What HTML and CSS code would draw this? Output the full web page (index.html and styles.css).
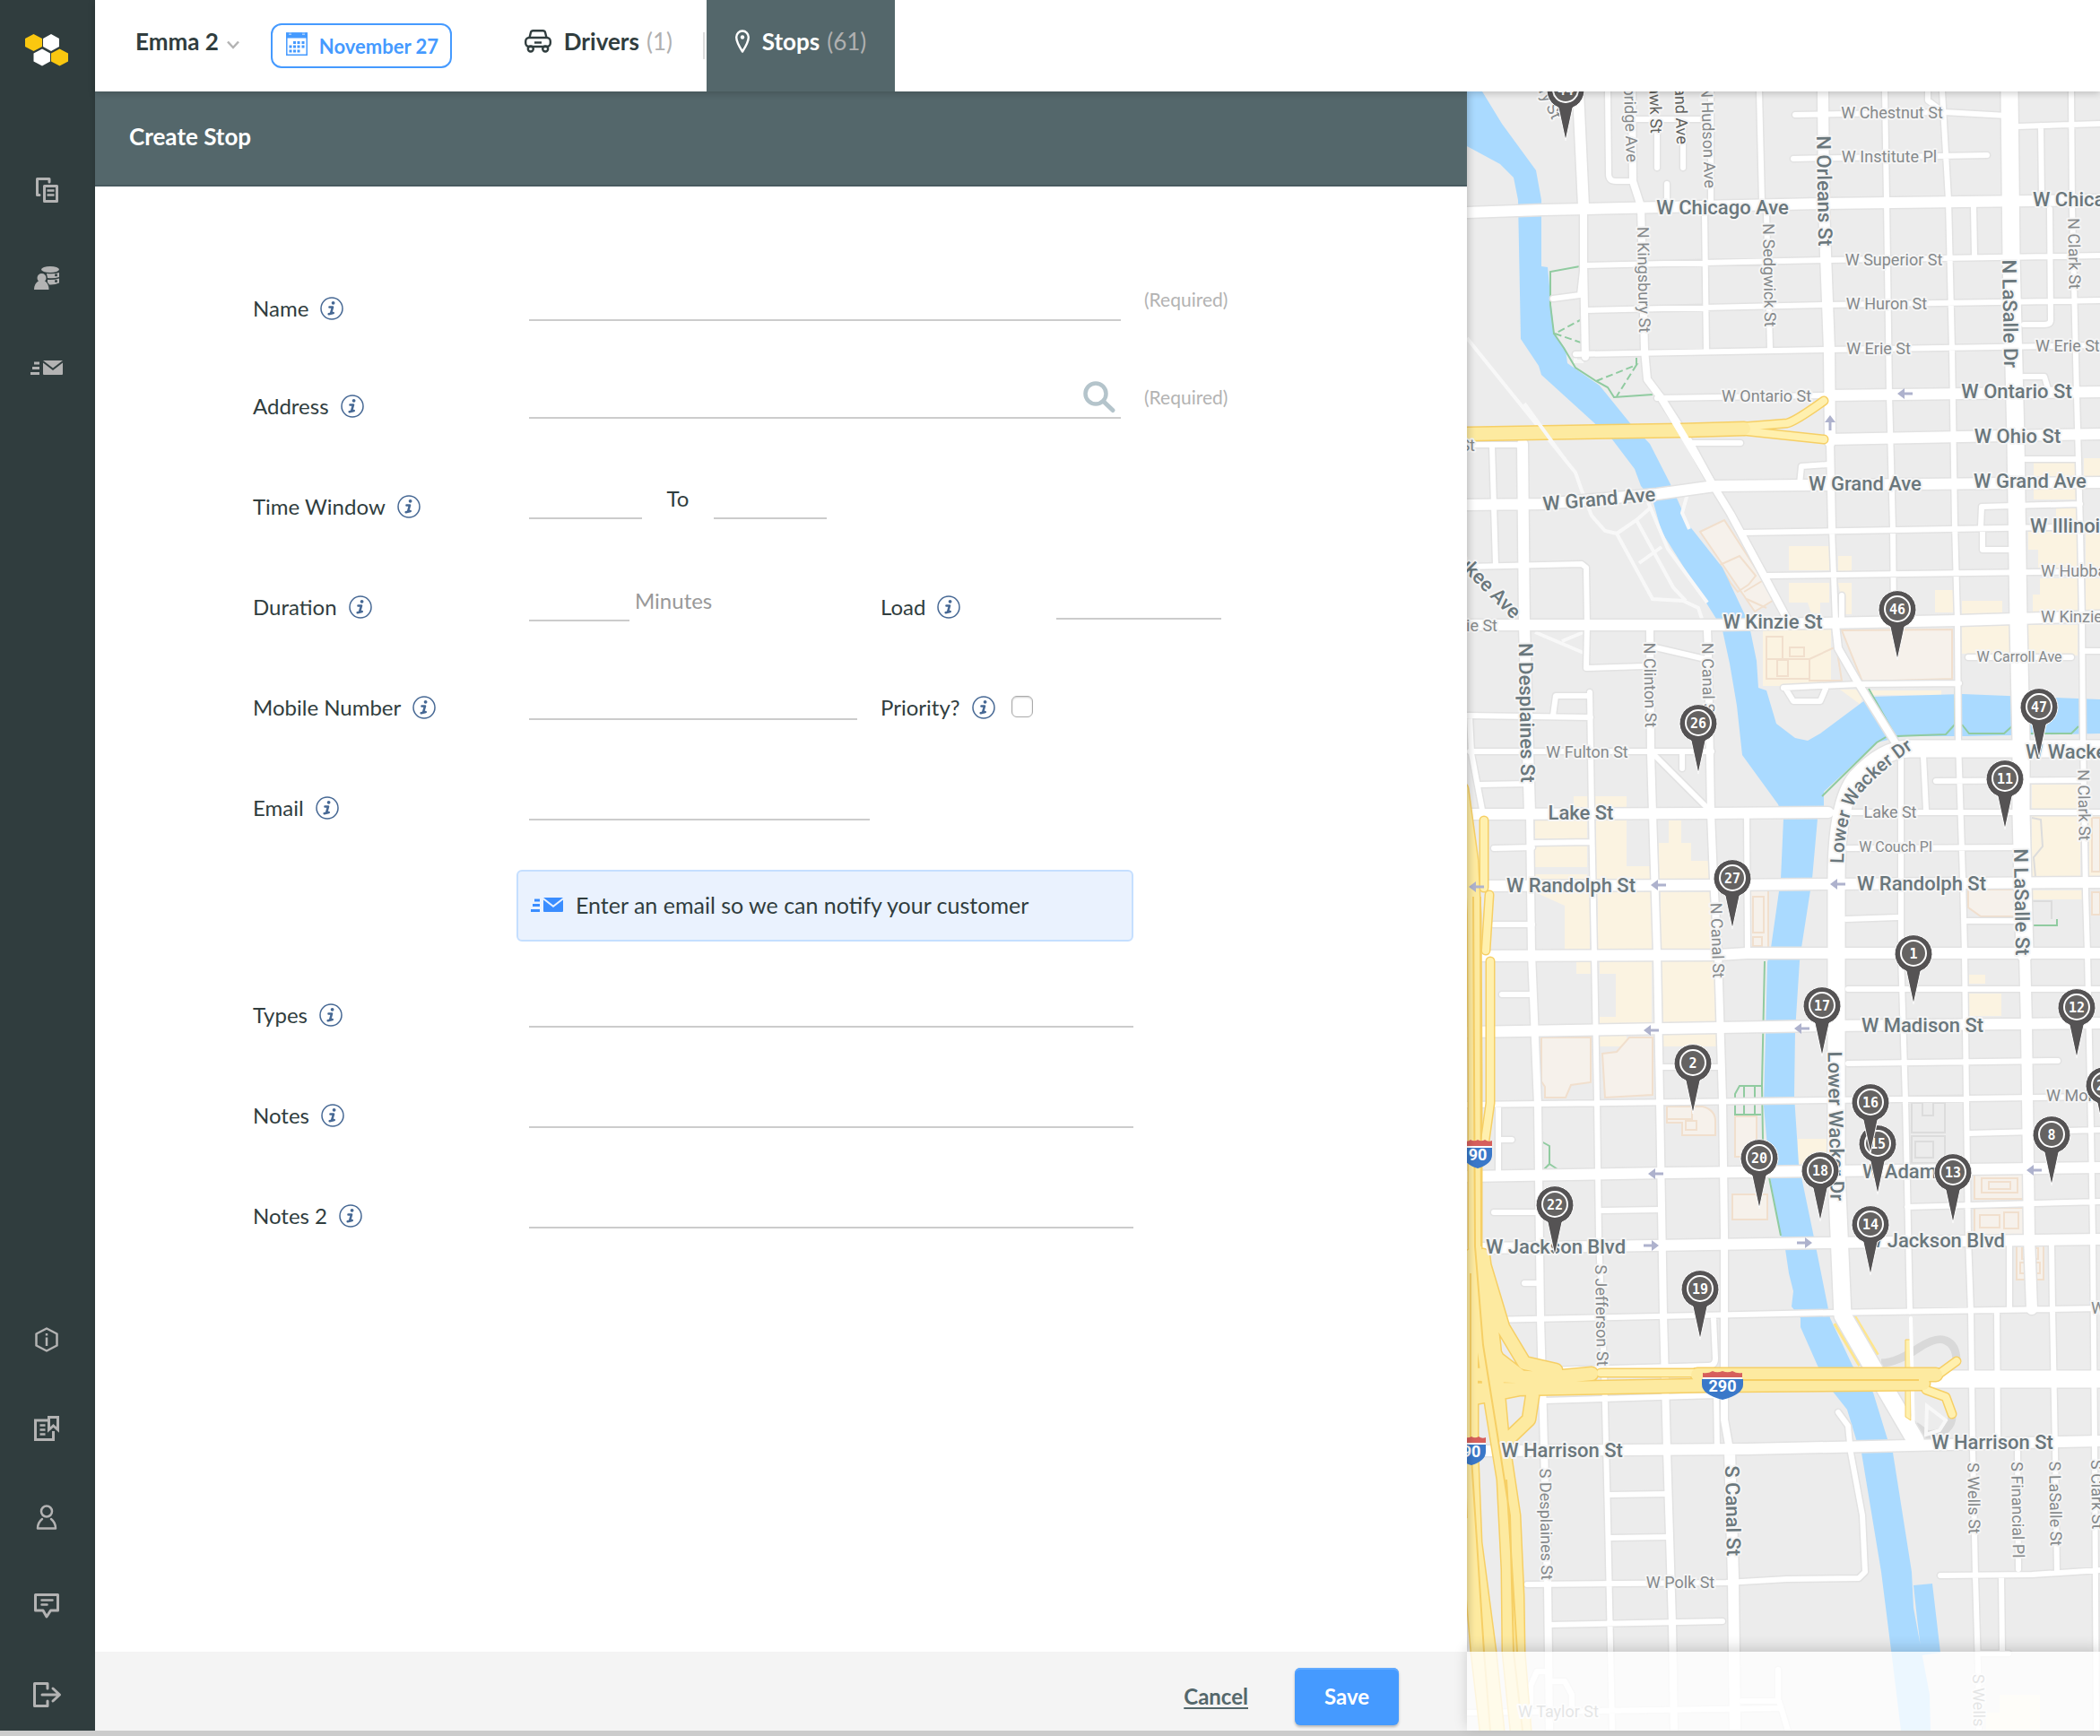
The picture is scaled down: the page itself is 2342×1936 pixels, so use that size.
FILE: index.html
```html
<!DOCTYPE html>
<html lang="en">
<head>
<meta charset="utf-8">
<title>Create Stop</title>
<meta name="viewport" content="width=device-width, initial-scale=1">
<link rel="stylesheet" href="styles.css">
</head>
<body>
<svg class="sprite" aria-hidden="true">
  <symbol id="info" viewBox="0 0 26 26">
    <circle cx="13" cy="13" r="12" fill="none" stroke="currentColor" stroke-width="1.5"/>
    <circle cx="14.600" cy="6.800" r="1.900" fill="currentColor"/>
    <path d="M10.500 11.500h3.500l-2 7M9.700 19.200l5-1.200" fill="none" stroke="currentColor" stroke-width="2.600" stroke-linecap="round" stroke-linejoin="round"/>
  </symbol>
  <symbol id="mail" viewBox="0 0 36 16">
    <path d="M4 1.500h6v3H4zM2 7h8v3H2zM0 13h10v3H0z" fill="currentColor"/>
    <path d="M14 0h22L25 8.500zM14 2.500l11 8.500 11-8.500V15q0 1-1 1H15q-1 0-1-1z" fill="currentColor"/>
  </symbol>
</svg>
<div class="app">
  <aside class="sidebar">
    <a href="#" class="logo" aria-label="Home">
      <svg viewBox="0 0 48 36" width="48" height="36">
        <path fill="#fac710" d="M9.500 0l9.500 5v9l-9.500 5L0 14V5zM38.500 16.500l9.500 5v9l-9.500 5-9.500-5v-9z"/>
        <path fill="#fff" d="M29 0l9 5v9l-9 5-9-5V5zM19 16.500l9 5v9l-9 5-9.500-5v-9z"/>
      </svg>
    </a>
    <nav class="side-nav">
      <a href="#" aria-label="Plans"><svg viewBox="0 0 28 28"><path d="M17 5V1.500H3.500v18H6" fill="none" stroke="currentColor" stroke-width="3" stroke-linecap="round" stroke-linejoin="round"/><rect x="11.500" y="9.500" width="14" height="17" fill="none" stroke="currentColor" stroke-width="3" stroke-linejoin="round"/><path d="M14.500 14.500h8M14.500 19.500h8" stroke="currentColor" stroke-width="2.500"/></svg></a>
      <a href="#" aria-label="Customers"><svg viewBox="0 0 28 28"><ellipse cx="18" cy="3.500" rx="10" ry="3.500" fill="currentColor"/><path d="M14 8q8 1 14-1v5q-6 2-13 1zM15 15q7 .5 13-1.500v5q-5 2.500-11 2-1-2-2-2.500z" fill="currentColor"/><circle cx="24.500" cy="9.800" r="1.500" fill="#303d3e"/><circle cx="24.500" cy="16.500" r="1.500" fill="#303d3e"/><circle cx="8.500" cy="13" r="6" fill="#303d3e"/><circle cx="8.500" cy="13" r="5" fill="currentColor"/><path d="M5.500 16h6q5 3 5 10H0q0-7 5.500-10z" fill="currentColor"/></svg></a>
      <a href="#" aria-label="Notifications"><svg class="wide" viewBox="0 0 36 16"><use href="#mail"/></svg></a>
    </nav>
    <nav class="side-nav side-nav-bottom">
      <a href="#" aria-label="About"><svg viewBox="0 0 28 28"><path d="M14 1.500l11.500 6v13L14 26.500l-11.500-6v-13z" fill="none" stroke="currentColor" stroke-width="2.500" stroke-linejoin="round"/><path d="M14 11.500v9.500M14 7v2.500" stroke="currentColor" stroke-width="2.500"/></svg></a>
      <a href="#" aria-label="Guides"><svg viewBox="0 0 28 28"><path d="M16 5H1.500v21.500h20V17" fill="none" stroke="currentColor" stroke-width="3"/><path d="M6.500 10.500h6M6.500 15.500h6M6.500 20.500h6" stroke="currentColor" stroke-width="2.500"/><path d="M16.500 1.500h10v14l-5-4.500-5 4.500z" fill="none" stroke="currentColor" stroke-width="3"/></svg></a>
      <a href="#" aria-label="Account"><svg viewBox="0 0 28 28"><circle cx="14" cy="7.500" r="6" fill="none" stroke="currentColor" stroke-width="2.500"/><path d="M9 16q-5 4-5 10.500h20Q24 20 19 16" fill="none" stroke="currentColor" stroke-width="2.500" stroke-linejoin="round" stroke-linecap="round"/></svg></a>
      <a href="#" aria-label="Feedback"><svg viewBox="0 0 28 28"><path d="M1.500 1.500h25v17.500h-8L14 26l-4-7H1.500z" fill="none" stroke="currentColor" stroke-width="3" stroke-linejoin="round"/><path d="M8.500 7.500h12M8.500 12.500h6" stroke="currentColor" stroke-width="2.500" stroke-linecap="round"/></svg></a>
      <a href="#" aria-label="Log out"><svg viewBox="0 0 28 28"><path d="M15 7V1.500H.500v25H15V21" fill="none" stroke="currentColor" stroke-width="3" stroke-linecap="round" stroke-linejoin="round"/><path d="M9 14h19M21 7l7.500 7-7.500 7" fill="none" stroke="currentColor" stroke-width="3" stroke-linecap="round" stroke-linejoin="round"/></svg></a>
    </nav>
  </aside>

  <header class="topbar">
    <button type="button" class="plan">Emma 2
      <svg viewBox="0 0 14 10" width="14" height="10"><path d="M1 1.500l6 6.500 6-6.500" fill="none" stroke="#b4b4b4" stroke-width="2.500"/></svg>
    </button>
    <button type="button" class="date">
      <svg viewBox="0 0 24 26" width="24" height="26"><path d="M.800 1h22.400v24.200H.800z" fill="none" stroke="currentColor" stroke-width="1.500"/><path d="M0 .500h3v2h3v-2h12v2h3v-2h3V6.500H0z" fill="currentColor"/><path d="M8 10h3v3H8zM12.500 10h3v3h-3zM17.500 10h3v3h-3zM3.500 14.500h3v3h-3zM8 14.500h3v3H8zM12.500 14.500h3v3h-3zM17.500 14.500h3v3h-3zM3.500 19.500h3v3h-3zM8 19.500h3v3H8zM12.500 19.500h3v3h-3z" fill="currentColor"/></svg>
      November 27
    </button>
    <nav class="tabs">
      <a href="#" class="tab">
        <svg viewBox="0 0 30 26" width="30" height="26" fill="none" stroke="currentColor" stroke-width="2.400"><path d="M5.500 9l1.500-6q.5-1.800 2.500-1.800h11q2 0 2.500 1.800l1.500 6"/><rect x="1.200" y="9" width="27.600" height="10" rx="4"/><path d="M11 14.500h8"/><circle cx="6.800" cy="21.500" r="3"/><circle cx="23.200" cy="21.500" r="3"/></svg>
        <span>Drivers</span><span class="count">(1)</span>
      </a>
      <a href="#" class="tab active" aria-current="page">
        <svg viewBox="0 0 16 26" width="16" height="26"><path d="M8 24.500Q1.200 14 1.200 8.500a6.800 7 0 0 1 13.600 0Q14.800 14 8 24.500z" fill="none" stroke="currentColor" stroke-width="2.400" stroke-linejoin="round"/><circle cx="8" cy="8.500" r="2.200" fill="currentColor"/></svg>
        <span>Stops</span><span class="count">(61)</span>
      </a>
    </nav>
  </header>

  <main class="panel">
    <h1 class="panel-title">Create Stop</h1>
    <form id="stop-form" class="stop-form">
      <div class="row row-first">
        <label class="label" for="name">Name <svg class="info"><use href="#info"/></svg></label>
        <div class="field"><input id="name" class="line full" type="text"><span class="required">(Required)</span></div>
      </div>
      <div class="row">
        <label class="label" for="address">Address <svg class="info"><use href="#info"/></svg></label>
        <div class="field">
          <div class="search full"><input id="address" class="line" type="text"><button type="button" aria-label="Search"><svg viewBox="0 0 36 36" width="36" height="36" fill="none" stroke="#b4c4cb"><circle cx="14" cy="14" r="11.500" stroke-width="4.500"/><path d="M22.500 22.500L33 32.500" stroke-width="5" stroke-linecap="round"/></svg></button></div>
          <span class="required">(Required)</span>
        </div>
      </div>
      <div class="row">
        <label class="label" for="from">Time Window <svg class="info"><use href="#info"/></svg></label>
        <div class="field"><input id="from" class="line time" type="text"><label class="to" for="until">To</label><input id="until" class="line time" type="text"></div>
      </div>
      <div class="row row-pair">
        <label class="label" for="duration">Duration <svg class="info"><use href="#info"/></svg></label>
        <div class="field"><input id="duration" class="line duration" type="text"><span class="unit">Minutes</span></div>
        <div class="second">
          <label class="label load-label" for="load">Load <svg class="info"><use href="#info"/></svg></label>
          <div class="field"><input id="load" class="line load" type="text"></div>
        </div>
      </div>
      <div class="row row-pair">
        <label class="label" for="mobile">Mobile Number <svg class="info"><use href="#info"/></svg></label>
        <div class="field"><input id="mobile" class="line mobile" type="tel"></div>
        <div class="second">
          <label class="label" for="priority">Priority? <svg class="info"><use href="#info"/></svg></label>
          <input id="priority" class="check" type="checkbox">
        </div>
      </div>
      <div class="row">
        <label class="label" for="email">Email <svg class="info"><use href="#info"/></svg></label>
        <div class="field"><input id="email" class="line email" type="email"></div>
      </div>
      <p class="notice"><svg viewBox="0 0 36 16" width="36" height="16"><use href="#mail"/></svg>Enter an email so we can notify your customer</p>
      <div class="row">
        <label class="label" for="types">Types <svg class="info"><use href="#info"/></svg></label>
        <div class="field"><input id="types" class="line long" type="text"></div>
      </div>
      <div class="row">
        <label class="label" for="notes">Notes <svg class="info"><use href="#info"/></svg></label>
        <div class="field"><input id="notes" class="line long" type="text"></div>
      </div>
      <div class="row">
        <label class="label" for="notes2">Notes 2 <svg class="info"><use href="#info"/></svg></label>
        <div class="field"><input id="notes2" class="line long" type="text"></div>
      </div>
    </form>
  </main>

  <section class="map" aria-label="Map of stops">
    <svg class="map-canvas" viewBox="1636 102 706 1828" preserveAspectRatio="xMinYMin slice">
      <defs>
        <path id="road-s" d="M1664 497L1668 630M1636 496H1690Q1698 496 1698 504M1793 102L1794 194Q1794 202 1802 202H1821M1848 140V187M1877 140V187M1825 133H1902M1859 205V228M1908 102V223M1901 237L1903 392M1962 102L1965 225L1970 237L1974 388M1732 333L1762 329L1766 293M1768 346L2039 340L2342 335M1757 395L2039 390L2342 385M1766 296L2039 290L2342 285M1848 444L2039 441M1884 494H1941M2007 540L2009 520L2039 518M2002 128L2168 125L2238 129M2000 177L2216 173M2250 141L2342 138M2150 102V112L2166 124M2276 140L2277 223M2286 233L2287 357Q2287 362 2280 362H2257M2201 230L2202 283M2257 420H2280L2285 437M2259 512H2318M2209 587L2210 565L2320 562M2211 590V613H2243M2102 102L2104 223L2107 440L2111 590L2112 687M2166 102L2173 223L2177 390L2180 583L2183 693L2184 827L2189 980L2191 1063L2193 1227L2195 1380L2198 1463L2200 1617L2203 1757L2206 1860L2207 1930M2310 102L2311 233L2316 440L2320 590L2322 693L2323 827L2326 997L2328 1063L2332 1260L2334 1380L2336 1610L2338 1930M1943 594L2342 587M1971 642L2342 637M2043 590L2047 693M2054 664V697M1636 632L1764 629L1769 633L1770 697L1769 745L1834 743M1846 722L1902 735M1636 798L1774 800M1732 798L1735 776H1773M1639 838H1909M1639 798L1641 840L1653 903M1650 875L1705 874M1773 772L1775 907L1778 1063L1781 1227L1783 1380L1789 1527L1793 1693L1798 1930M1876 840V857M1843 840L1908 905M1948 907L1949 1063M1989 767L2073 763L2185 762M1992 769L2000 782H2030L2036 768M1666 946L1709 945M1709 940L1775 939M1666 1031H1709M1675 1109H1709M2061 1103L2342 1103M2061 1186L2295 1183M1852 1190H1918M1636 1232L2039 1227L2342 1223M2195 1264L2342 1260M1666 1352H1714M1787 1350L1852 1349M2127 1346L2342 1340M1657 1472L2039 1464L2342 1459M1700 1431H1716M1672 1271H1686M1671 1235V1306M2039 906H2342M2120 843V1063L2125 1227L2130 1463M2145 843L2148 903M2159 871L2320 870M2061 946L2259 945M2059 1025L2116 1023M2193 1027H2259M1723 1562L1912 1556M1721 1528L1905 1523Q1913 1523 1913 1515L1911 1470M1914 1550L1915 1617M1796 1667L1859 1666M1797 1715L1862 1714M1703 1767L1925 1765L1993 1761L2073 1760L2080 1753L2077 1690L2064 1620L2061 1590L2050 1575M1728 1812L1921 1808M2164 1757L2266 1756L2342 1751M2232 1757L2233 1843M2227 1463L2228 1605M2250 1613L2251 1750M2288 1387L2289 1460L2292 1617L2294 1753M2241 1387V1460M1636 1910L1984 1905M1943 1897H1984L1994 1930M1983 1862V1897M1707 1900V1880L1714 1864H1727M1730 1875H1745L1753 1890V1905M2206 1844H2240M2322 726H2342M2195 733H2310"/>
        <path id="road-m" d="M1766 230V293L1768 398M1820 102L1821 202L1830 230L1834 390L1837 423L1852 443L1884 493L1908 537L1930 573L1970 647L1993 690M1706 907L1708 1063L1715 1232L1718 1470L1721 1577L1726 1767L1728 1930M2041 493L2043 590M2047 697L2050 723L2073 763L2118 835M1840 700L1841 840L1843 907L1848 1063L1851 1227L1855 1467L1859 1617L1865 1810L1867 1930M1904 702L1905 730L1908 907L1911 980L1916 1063L1921 1227L1923 1373V1583L1929 1617"/>
        <path id="road-l" d="M1760 102L1766 230M2033 102L2034 230L2040 390L2041 493M1698 495L1700 697L1706 907M1636 237L1721 234L2030 227L2342 223M2039 441L2342 437M2039 490L2342 484M1636 563L1721 562L1848 551L1912 542L2342 538M1636 697H1921L2184 692L2342 687M1636 908L1902 907L2039 906M1636 988L1916 987L2039 986L2342 984M1636 1066L1916 1065L1948 1063H2342M1636 1151L1916 1146L2039 1144L2342 1141M1636 1312L1857 1308L2039 1306L2342 1302M1653 1392L2039 1386L2342 1382M1657 1618L1948 1616L2130 1612L2342 1607M1929 1617L1933 1760L1935 1930M2258 1063L2260 1143L2263 1380L2266 1460"/>
        <path id="road-xl" d="M2241 102L2243 287L2248 490L2251 693L2254 827V907L2258 1063M2342 835H2130Q2100 835 2070 868Q2048 895 2048 980V1307L2055 1467L2084 1517L2136 1606M2155 1538H2342"/>
        <path id="freeway" d="M1630 880L1641 960L1644 1020L1645 1200V1390L1651 1480L1664 1570L1677 1650L1682 1750L1683 1842L1692 1930M1654 1400L1666 1500L1676 1610L1688 1690L1692 1780L1693 1842L1700 1930M1641 1400V1620L1645 1720L1661 1842L1670 1930M1636 1700L1648 1842L1658 1930M1652 1400L1676 1480L1700 1520L1735 1528M1709 1557L1705 1583L1684 1603M1642 1460L1670 1515L1700 1538M1640 1560L1700 1548M1636 1532L1721 1537L1775 1532M1893 1533H2159M1636 1550L1902 1545L2145 1543M1636 484L1875 480L1945 478"/>
        <path id="freeway-ramp" d="M1655 915V990M1661 998L1657 1060M1662 1072L1662 1230L1655 1280M1930 477L1993 472Q2002 470 2034 447M1930 479L2034 490M1785 1531H1890M2182 1518L2160 1534M2148 1550L2170 1558L2177 1577"/>
        <path id="wacker-curve" d="M2056 963Q2057 905 2078 882Q2103 854 2150 824"/>
        <g id="pin">
          <path d="M0 57L-8 20A21 21 0 1 1 8 20z" fill="#555354" stroke="#fff" stroke-width="1"/>
          <circle r="14" fill="#656362" stroke="#fff" stroke-width="2"/>
        </g>
        <path id="arrow" d="M-9 0l8-6v4.500h9v3h-9V6z" fill="#aeb2cd"/>
      </defs>
      <rect x="1636" y="102" width="706" height="1828" fill="#ececec"/>
      <path class="commercial" d="M1755 888h59v15h-59zM1712 915h58v20h-58zM1780 915h34v52h-34zM1780 966h60v20h-60zM1712 943h58v24h-58zM1712 975h58v10h-58zM1861 915h14v25h-14zM1850 940h36v20h20v23h-56zM1782 995h60v65h-60zM1852 995h58v65h-58zM1712 995l33 15v50h28v-65zM1758 1072h18v14h-18zM1784 1072h58v70h-58v-8h18v-48h-18zM1852 1072h62v70h-62zM1852 1153h62v14h-62zM1784 1153h30v14h-30zM1995 609h45v27h-45zM1995 650h45v22h-10v12h-10l-4-12h-21zM2050 620h15v18h-15zM2050 650h15v35h-8zM2188 697h60v32h-60zM2158 658h22v25h-22zM2188 670h45v15h-45zM2262 593h56v40h-45v-20h-11zM2326 593h16v40h-16zM2275 645h42v38h-50v-20h8zM2326 645h16v38h-16zM2262 697h55v34h-55zM2268 515h48v16h-48zM2268 545h48v12h-48zM2293 566h24v18h-24zM2324 511h18v20h-18zM2266 875h54v28h-54zM2266 910h54v68h-54zM2330 910h12v68h-12zM2262 993h60v10h-60zM1966 702h76v63h-76zM2052 769h30l-8 16zM2085 770h80v5h-80zM2196 1108h36v25h-36zM2196 1087h18v10h-18zM2005 1270h32v28h-32zM2230 1890h45v40h-60v-20h15z"/>
      <path class="building" d="M1896 593l27-13 57 88-23 14zM2054 703l123-1v55l-100 3zM1719 1157h55v50l-22 3-6 14h-23v-12l-4-6zM1787 1175l16-2 14-16h26v64l-53 3zM1859 1234h40q14 4 14 16v16h-37v-14h-17zM1935 1245h24v45h-24zM1932 1332h39v28h-39zM2202 1307h56v30h-56zM2202 1347h56v30h-56zM2249 1387h30v40h-30zM1950 993h22v65h-22zM2195 992h60v30h-46l-14-10zM2333 912h9v60h-9zM2333 995h9v25h-9z"/>
      <path class="building-line" d="M1918 630l22-10 18 22-8 10-12 8-8-10zM1945 660l20-12M1948 668l22 10M1970 710h18v25h-18zM1996 722h16v10h-16zM1970 735h48v22h-48zM1982 736h12v18h-12zM2018 735l30-14 6 38h-36zM2210 1314h40v16h-40zM2218 1318h24v8h-24zM2208 1355h22v14h-22zM2235 1352h16v18h-16zM2255 1392h18v12h-18zM2253 1408h22v12h-22zM1859 1248h28v-12M1880 1250h12v10h-12zM1955 1000h12v40h-12zM1955 1045h10v10h-10z"/>
      <path class="civic" d="M2132 1230h12v14h12v-14h13v33h-37zM2132 1267h37v30h-37zM2136 1273h20v18h-20zM2266 912l10 2 2 30-10 12 2 22M2266 1005h22v20"/>
      <path class="water" d="M1636 102H1653L1675 138L1713 190L1719 223V297L1726 298L1729 330L1733 370L1746 390L1748 405L1784 430L1818 472L1840 495L1864 542L1883 585L1921 633L1948 690L1952 703L1959 737L1961 767L1970 770L1981 807L2002 823L2016 826L2030 818L2077 783L2086 777L2189 774L2342 780V818L2195 821L2123 821L2093 828L2034 883V900L2027 913L2021 980L2009 1057L2007 1072L2002 1150L2001 1222L2006 1298L2023 1380L2039 1460L2041 1470L2066 1523L2089 1553L2105 1605L2111 1620L2132 1753L2134 1793L2143 1842L2152 1890L2153 1930H2120L2116 1897L2109 1840L2098 1753L2076 1620L2070 1605L2060 1572L2041 1548L2027 1523L2008 1480V1470L1998 1457L2000 1440L1995 1420L1991 1393L1986 1378L1974 1313L1967 1233L1971 1073L1975 1057L1986 980L1989 913L1983 897L1943 842L1937 787L1929 740L1921 703L1914 690L1853 593L1843 557L1830 542L1823 523L1798 490L1719 418L1716 408L1696 378L1693 223L1688 198L1673 183L1636 163ZM2134 1768L2155 1766L2164 1843L2143 1846L2138 1805Z"/>
      <path class="trail" d="M1762 297L1729 303V340L1733 372L1744 388L1757 410L1780 425L1793 432L1800 443L1843 440M2084 768L2114 821L2170 819L2180 808V702M2188 808L2196 818H2235L2246 808M2262 808V818H2310L2318 810M2114 821H2105L2093 828L2032 888M1968 1072L1965 1210L1966 1270L1973 1313L1986 1378M1964 1211H1940L1935 1220V1243H1964M1945 1211V1243M1935 1228H1964M1957 1211V1243M1719 1273L1728 1278V1298L1722 1304M1728 1298L1737 1304M2266 1032H2294V1025"/>
      <path class="trail dashed" d="M1766 355L1734 372L1766 383M1780 425L1825 407L1803 442M1825 407V397"/>
      <path class="rail" d="M1636 377L1757 527L1764 547L1775 575L1790 592L1803 595L1825 580L1842 565M1803 595L1843 668L1877 670L1894 678L1898 690M1825 580L1866 655L1880 670M1853 610L1828 628M1838 560L1860 612L1904 672M1712 705L1766 728M1742 715L1766 705M1883 547L1876 572L1884 590M1757 395V403H1766"/>
      <path class="loop" d="M2098 1520Q2115 1520 2140 1503Q2160 1490 2170 1495Q2182 1500 2182 1518M2177 1577Q2178 1598 2150 1600L2136 1590"/>
      <path class="rail" d="M2148 1600L2149 1568L2170 1584L2163 1595Z"/>
      <path class="slip" d="M2056 1470L2084 1517"/>
      <g class="casing"><use href="#road-s" stroke-width="9"/><use href="#road-m" stroke-width="11"/><use href="#road-l" stroke-width="15"/><use href="#road-xl" stroke-width="22"/></g>
      <g class="surface"><use href="#road-s" stroke-width="6"/><use href="#road-m" stroke-width="8"/><use href="#road-l" stroke-width="12"/><use href="#road-xl" stroke-width="19"/></g>
      <path class="link" d="M2125 1494V1580L2131 1584V1494Z"/>
      <path class="surface" stroke-width="4" d="M2131 1470L2134 1600"/>
      <g class="freeway-casing"><use href="#freeway-ramp" stroke-width="11"/><use href="#freeway" stroke-width="17"/></g>
      <use href="#freeway-ramp" class="ramp"/>
      <use href="#freeway" class="freeway"/>
      <path class="freeway-line" d="M1643 1000L1645 1390L1654 1500L1670 1600L1684 1690L1688 1842L1698 1930M1651 1000L1652 1390M1640 1420V1610L1655 1842L1662 1930M1900 1539H2140M1680 1650L1692 1842"/>
      <path class="surface" stroke-width="8" d="M1852 443L1908 537"/>
      <path class="rail" d="M1700 450L1745 512"/>

      <use href="#arrow" x="2125" y="439"/><use href="#arrow" transform="translate(2041 472) rotate(90)"/>
      <use href="#arrow" x="1647" y="989"/><use href="#arrow" x="1850" y="987"/><use href="#arrow" x="2050" y="986"/>
      <use href="#arrow" x="1842" y="1149"/><use href="#arrow" x="2010" y="1147"/><use href="#arrow" x="1847" y="1309"/><use href="#arrow" x="2269" y="1305"/>
      <use href="#arrow" transform="translate(1841 1389) rotate(180)"/><use href="#arrow" transform="translate(2012 1386) rotate(180)"/>

      <g class="street">
        <text x="2110" y="132">W Chestnut St</text><text x="2107" y="181">W Institute Pl</text><text x="2112" y="296">W Superior St</text>
        <text x="2104" y="345">W Huron St</text><text x="2095" y="395">W Erie St</text><text class="start" x="2270" y="392">W Erie St</text>
        <text x="1970" y="448">W Ontario St</text><text class="end" x="1645" y="503">W Ohio St</text>
        <text class="start" x="2276" y="643">W Hubbard St</text><text class="start" x="2276" y="694">W Kinzie St</text><text class="end" x="1670" y="704">W Kinzie St</text>
        <text class="small" x="2252" y="738">W Carroll Ave</text><text x="1770" y="845">W Fulton St</text><text x="2108" y="912">Lake St</text>
        <text class="small" x="2114" y="950">W Couch Pl</text><text class="start" x="2282" y="1228">W Monroe St</text><text class="start" x="2332" y="1465">W Van Buren St</text>
        <text x="1874" y="1771">W Polk St</text><text x="1738" y="1915">W Taylor St</text>
        <text class="end" transform="translate(1814 181) rotate(88)">N Cambridge Ave</text>
        <text class="end dark" transform="translate(1841 149) rotate(88)">N Mohawk St</text>
        <text class="end dark" transform="translate(1870 161) rotate(88)">N Cleveland Ave</text>
        <text class="end" transform="translate(1901 210) rotate(88)">N Hudson Ave</text>
        <text class="end" transform="translate(1731 134) rotate(65)">N Kingsbury St</text>
        <text transform="translate(1827 312) rotate(89)">N Kingsbury St</text>
        <text transform="translate(1967 307) rotate(89)">N Sedgwick St</text>
        <text transform="translate(2307 283) rotate(89)">N Clark St</text>
        <text transform="translate(1834 764) rotate(89)">N Clinton St</text>
        <text class="start" transform="translate(1898 717) rotate(89)">N Canal St</text>
        <text transform="translate(2318 898) rotate(89)">N Clark St</text>
        <text transform="translate(1909 1049) rotate(88)">N Canal St</text>
        <text transform="translate(1780 1467) rotate(89)">S Jefferson St</text>
        <text transform="translate(1718 1700) rotate(89)">S Desplaines St</text>
        <text transform="translate(2195 1671) rotate(89)">S Wells St</text>
        <text transform="translate(2244 1684) rotate(89)">S Financial Pl</text>
        <text transform="translate(2286 1677) rotate(89)">S LaSalle St</text>
        <text class="start" transform="translate(2332 1628) rotate(89)">S Clark St</text>
        <text class="start" transform="translate(2200 1867) rotate(89)">S Wells St</text>
      </g>
      <g class="street avenue">
        <text x="1921" y="239">W Chicago Ave</text><text class="start" x="2267" y="230">W Chicago Ave</text>
        <text x="2249" y="444">W Ontario St</text><text x="2250" y="494">W Ohio St</text><text x="2080" y="547">W Grand Ave</text><text x="2264" y="544">W Grand Ave</text>
        <text transform="translate(1784 564) rotate(-5)">W Grand Ave</text><text class="start" x="2264" y="594">W Illinois St</text>
        <text x="1977" y="701">W Kinzie St</text><text x="1763" y="914">Lake St</text><text x="1752" y="995">W Randolph St</text><text x="2143" y="993">W Randolph St</text>
        <text class="start" x="2259" y="846">W Wacker Dr</text><text x="2144" y="1151">W Madison St</text><text class="start" x="2077" y="1314">W Adams St</text>
        <text x="1735" y="1398">W Jackson Blvd</text><text class="end" x="2236" y="1391">W Jackson Blvd</text>
        <text x="1742" y="1625">W Harrison St</text><text x="2222" y="1616">W Harrison St</text>
        <text class="end" transform="translate(1687 691) rotate(45)">N Milwaukee Ave</text>
        <text transform="translate(2027 213) rotate(89)">N Orleans St</text>
        <text transform="translate(2234 350) rotate(89)">N LaSalle Dr</text>
        <text transform="translate(2247 1006) rotate(89)">N LaSalle St</text>
        <text transform="translate(1695 795) rotate(89)">N Desplaines St</text>
        <text transform="translate(2040 1256) rotate(89)">Lower Wacker Dr</text>
        <text transform="translate(1925 1685) rotate(89)">S Canal St</text>
        <text class="start curved"><textPath href="#wacker-curve">Lower Wacker Dr</textPath></text>
      </g>

      <g class="shield">
        <g transform="translate(1648 1287)"><path fill="#fff" d="M-16-10h32v6h-32z"/><path fill="#d65f5c" d="M-16-9v-6q4 2 8-1 4 2.500 8 0 4 2.500 8 0 4 3 8 1v6z"/><path fill="#3a78c9" d="M-16-7h32v8q0 10-16 15Q-16 11-16 1z"/><text y="7">90</text></g>
        <g transform="translate(1641 1618)"><path fill="#fff" d="M-16-10h32v6h-32z"/><path fill="#d65f5c" d="M-16-9v-6q4 2 8-1 4 2.500 8 0 4 2.500 8 0 4 3 8 1v6z"/><path fill="#3a78c9" d="M-16-7h32v8q0 10-16 15Q-16 11-16 1z"/><text y="7">90</text></g>
        <g transform="translate(1921 1545)"><path fill="#fff" d="M-22-10h44v6h-44z"/><path fill="#d65f5c" d="M-22-9v-5q6 1 11-2 5 2.500 11 0 6 2.500 11 0 5 3 11 2v5z"/><path fill="#3a78c9" d="M-23-7h46v6q0 11-23 17Q-23 10-23-1z"/><text y="7">290</text></g>
      </g>

      <g class="pins">
        <g transform="translate(1746 100)"><use href="#pin"/><text y="6">44</text></g>
        <g transform="translate(2116 679)"><use href="#pin"/><text y="6">46</text></g>
        <g transform="translate(2274 788)"><use href="#pin"/><text y="6">47</text></g>
        <g transform="translate(1894 806)"><use href="#pin"/><text y="6">26</text></g>
        <g transform="translate(2236 868)"><use href="#pin"/><text y="6">11</text></g>
        <g transform="translate(1932 979)"><use href="#pin"/><text y="6">27</text></g>
        <g transform="translate(2134 1063)"><use href="#pin"/><text y="6">1</text></g>
        <g transform="translate(2032 1121)"><use href="#pin"/><text y="6">17</text></g>
        <g transform="translate(2316 1123)"><use href="#pin"/><text y="6">12</text></g>
        <g transform="translate(1888 1185)"><use href="#pin"/><text y="6">2</text></g>
        <g transform="translate(2347 1210)"><use href="#pin"/><text y="6">21</text></g>
        <g transform="translate(2094 1275)"><use href="#pin"/><text y="6">15</text></g>
        <g transform="translate(2086 1229)"><use href="#pin"/><text y="6">16</text></g>
        <g transform="translate(2288 1265)"><use href="#pin"/><text y="6">8</text></g>
        <g transform="translate(1962 1291)"><use href="#pin"/><text y="6">20</text></g>
        <g transform="translate(2030 1305)"><use href="#pin"/><text y="6">18</text></g>
        <g transform="translate(2178 1307)"><use href="#pin"/><text y="6">13</text></g>
        <g transform="translate(1734 1343)"><use href="#pin"/><text y="6">22</text></g>
        <g transform="translate(2086 1365)"><use href="#pin"/><text y="6">14</text></g>
        <g transform="translate(1896 1437)"><use href="#pin"/><text y="6">19</text></g>
      </g>
    </svg>
  </section>

  <footer class="actions">
    <a href="#" class="cancel">Cancel</a>
    <button type="submit" form="stop-form" class="save">Save</button>
  </footer>
  <div class="map-fade"></div>
</div>
</body>
</html>
```
FILE: styles.css
```css
* { box-sizing: border-box; }

body {
  margin: 0;
  font-family: Lato, sans-serif;
  font-size: 24px;
  line-height: 32px;
  color: #303d3e;
  background: #fff;
}

button, input { font: inherit; color: inherit; }
button { background: none; border: 0; padding: 0; cursor: pointer; }
a { color: inherit; text-decoration: none; }
svg { flex: none; display: block; }
.sprite { position: absolute; width: 0; height: 0; }

.app {
  display: grid;
  grid-template-columns: 106px minmax(0, 1530fr) minmax(0, 706fr);
  grid-template-rows: 102px 1fr 88px;
  min-height: 100vh;
  border-bottom: 6px solid #ccc;
}

/* Sidebar */
.sidebar {
  grid-row: 1 / 4;
  display: flex;
  flex-direction: column;
  align-items: center;
  padding: 38px 2px 26px 0;
  background: #303d3e;
  color: #b3b3b3;
}
.side-nav { display: flex; flex-direction: column; align-items: center; gap: 71px; margin-top: 124px; }
.side-nav-bottom { margin-top: auto; }
.side-nav a { display: flex; align-items: center; height: 28px; }
.side-nav svg { width: 28px; height: 28px; overflow: visible; }
.side-nav .wide { width: 36px; height: 16px; }

/* Header */
.topbar {
  grid-column: 2 / 4;
  display: flex;
  align-items: center;
  padding-left: 45px;
  background: #fff;
  z-index: 2;
  box-shadow: 0 2px 8px rgba(0, 0, 0, .2);
}
.plan, .tab { font-size: 26px; font-weight: 700; padding-bottom: 10px; }
.plan { display: flex; align-items: center; gap: 9px; }
.plan svg { margin-top: 8px; }
.date {
  display: flex;
  align-items: center;
  gap: 13px;
  width: 202px;
  height: 50px;
  margin-left: 35px;
  padding: 2px 0 0 15px;
  border: 2px solid #459aff;
  border-radius: 12px;
  color: #459aff;
  font-size: 22px;
  font-weight: 700;
  white-space: nowrap;
}
.date svg { margin-bottom: 6px; }
.tabs { display: flex; align-self: stretch; margin-left: 81px; }
.tab { position: relative; display: flex; align-items: center; gap: 8px; width: 203px; }
.tab svg { margin-right: 6px; }
.tab::after { content: ""; position: absolute; right: 2px; top: 36px; width: 2px; height: 30px; background: #ddd; }
.tab.active { width: 210px; padding-left: 32px; background: #54676b; color: #fff; }
.tab.active::after { display: none; }
.count { color: #b0b0b0; font-weight: 400; }

/* Form panel */
.panel { z-index: 1; background: #fff; box-shadow: 2px 0 8px rgba(0, 0, 0, .2); }
.panel-title {
  margin: 0;
  height: 106px;
  padding: 33px 38px;
  border-bottom: 2px solid #485a5f;
  background: #54676b;
  color: #fff;
  font-size: 26px;
  font-weight: 700;
  line-height: 34px;
}
.stop-form { padding: 84px 60px 40px 176px; }
.row { display: grid; grid-template-columns: 308px minmax(0, 1fr); align-items: center; height: 112px; }
.row-first { height: 106px; }
.row-pair { grid-template-columns: 308px 392px minmax(0, 1fr); }
.label { display: flex; align-items: center; gap: 13px; white-space: nowrap; }
.info { width: 26px; height: 26px; color: #466894; }
.row > .label, .second > .label { padding-bottom: 2px; }
.field { display: flex; align-items: center; padding-bottom: 20px; }
.line {
  width: 100%;
  min-width: 0;
  height: 46px;
  padding: 0 4px;
  border: 0;
  border-bottom: 2px solid #ccc;
  border-radius: 0;
  background: none;
}
.full { flex: 0 1 660px; }
.long { flex: 0 1 674px; }
.email { flex: 0 1 380px; }
.mobile { flex: 0 1 366px; }
.load { flex: 0 0 184px; }
.time { flex: 0 0 126px; }
.duration { flex: 0 0 112px; height: 50px; }
.search { display: flex; align-items: center; border-bottom: 2px solid #ccc; }
.search .line { height: 44px; border: 0; }
.search button { margin-right: 6px; }
.required { margin-left: 26px; padding-bottom: 2px; color: #b3b3b3; font-size: 21px; }
.to { width: 80px; text-align: center; }
.unit { margin-left: 6px; padding-top: 4px; color: #999; }
.second { display: flex; align-items: center; }
.second .field { flex: 1; }
.load-label { flex: 0 0 196px; }
.check {
  appearance: none;
  width: 24px;
  height: 24px;
  margin: 0 0 4px 18px;
  border: 1px solid #aaa;
  border-radius: 6px;
  background: #fff;
  box-shadow: inset 0 1px 2px rgba(0, 0, 0, .2);
}
.notice {
  display: flex;
  align-items: center;
  gap: 14px;
  max-width: 688px;
  height: 80px;
  margin: 12px 0 27px 294px;
  padding: 0 14px 2px;
  border: 2px solid #c5dfff;
  border-radius: 6px;
  background: #eaf2fe;
  font-size: 25px;
}
.notice svg { color: #3a8dff; }

/* Footer */
.actions {
  grid-column: 2;
  z-index: 1;
  display: flex;
  justify-content: flex-end;
  align-items: center;
  gap: 52px;
  padding: 12px 76px 0 0;
  background: #f4f4f4;
  font-weight: 700;
}
.cancel { color: #54676b; text-decoration: underline; text-underline-offset: 3px; }
.save {
  width: 116px;
  height: 64px;
  border-radius: 6px;
  background: #459aff;
  color: #fff;
  box-shadow: 0 2px 3px rgba(0, 0, 0, .25), inset 0 2px 0 #62aaff;
}
.map-fade {
  grid-column: 3;
  grid-row: 3;
  z-index: 1;
  background: rgba(255, 255, 255, .78);
  box-shadow: 0 -4px 14px rgba(0, 0, 0, .16);
}

/* Map */
.map { position: relative; grid-column: 3; grid-row: 2 / 4; overflow: hidden; }
.map-canvas { position: absolute; inset: 0; width: 100%; height: 100%; }
.water { fill: #aadaff; }
.commercial { fill: #fbf3e1; }
.building { fill: #f6f1eb; stroke: #f1dfcd; stroke-width: 2; }
.building-line { fill: none; stroke: #f1dfcd; stroke-width: 2; }
.civic { fill: none; stroke: #dcdcdc; stroke-width: 2; }
.trail { fill: none; stroke: #90cba0; stroke-width: 2; }
.dashed { stroke-dasharray: 8 4; }
.rail { fill: none; stroke: #f8f8f8; stroke-width: 4; }
.loop { fill: none; stroke: #d9d9d9; stroke-width: 9; }
.slip { fill: none; stroke: #ffe68c; stroke-width: 27; }
.link { fill: #fff0ae; stroke: #f6cf65; stroke-width: 1; }
.casing, .surface { fill: none; stroke-linejoin: round; stroke-linecap: round; }
.casing { stroke: #e2e2e2; }
.surface { stroke: #fff; }
.freeway-casing, .ramp, .freeway { fill: none; stroke-linejoin: round; stroke-linecap: round; }
.freeway-casing { stroke: #f6cf65; }
.ramp { stroke: #fff0ae; stroke-width: 8; }
.freeway { stroke: #fdeaa0; stroke-width: 14; }
.freeway-line { fill: none; stroke: #f6cf65; stroke-width: 2; }
.street { font-family: Roboto, sans-serif; }
.street text {
  font-size: 18px;
  fill: #85898b;
  stroke: #f5f5f5;
  stroke-width: 4px;
  stroke-linejoin: round;
  paint-order: stroke;
  text-anchor: middle;
}
.street .small { font-size: 16px; }
.street .dark { fill: #5f605c; }
.avenue text { font-size: 22px; fill: #6a777c; font-weight: 500; }
.avenue .curved { font-size: 21px; }
.street .start { text-anchor: start; }
.street .end { text-anchor: end; }
.shield text { font: 700 18px Roboto, sans-serif; fill: #fff; text-anchor: middle; }
.pins text { font: 700 15px "DejaVu Sans Mono", monospace; fill: #fff; text-anchor: middle; }
```
